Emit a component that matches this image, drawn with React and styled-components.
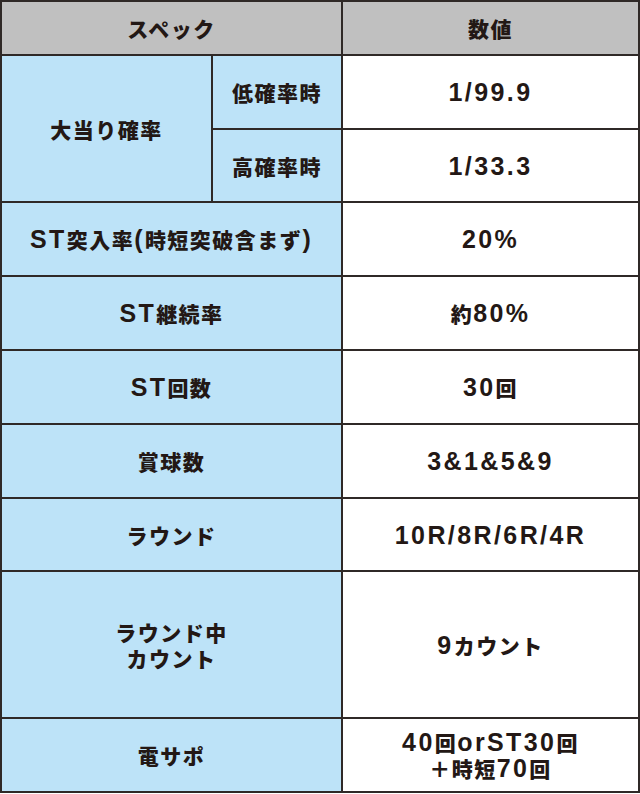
import React from "react";
import styled, { createGlobalStyle } from "styled-components";

const Global = createGlobalStyle`
  html, body { margin: 0; padding: 0; background: #ffffff; }
  body { font-family: "Noto Sans CJK JP", "Liberation Sans", sans-serif; }
`;

const Table = styled.div`
  width: 640px;
  box-sizing: border-box;
  display: grid;
  grid-template-columns: 209px 128px 295px;
  grid-template-rows: 52px 72px 71px 72px 72px 72px 72px 71px 145px 72px;
  gap: 2px;
  padding: 2px;
  background: #2f2927;
  color: #231815;
`;

const Cell = styled.div`
  display: flex;
  align-items: center;
  justify-content: center;
  background: ${(p) =>
    p.$kind === "head" ? "#c0c0c0" : p.$kind === "label" ? "#bde3f8" : "#ffffff"};
  grid-column: ${(p) => p.$col || "auto"};
  grid-row: ${(p) => p.$row || "auto"};
`;

const Label = styled.div`
  font-family: "Noto Sans CJK JP", sans-serif;
  font-weight: 900;
  font-size: 21px;
  letter-spacing: 1.5px;
  line-height: 26px;
  text-align: center;
  white-space: nowrap;
`;

const Latin = styled.span`
  font-family: "Liberation Sans", Arial, sans-serif;
  font-weight: 700;
  font-size: 25px;
  letter-spacing: 2.4px;
  line-height: 1;
`;

function Txt({ children }) {
  const lines = String(children).split("\n");
  return (
    <Label>
      {lines.map((line, li) => (
        <React.Fragment key={li}>
          {li > 0 && <br />}
          {line
            .split(/([\x21-\x7E]+)/)
            .filter(Boolean)
            .map((part, i) =>
              /^[\x21-\x7E]+$/.test(part) ? (
                <Latin key={i}>{part}</Latin>
              ) : (
                <React.Fragment key={i}>{part}</React.Fragment>
              )
            )}
        </React.Fragment>
      ))}
    </Label>
  );
}

const rows = [
  ["ST突入率(時短突破含まず)", "20%"],
  ["ST継続率", "約80%"],
  ["ST回数", "30回"],
  ["賞球数", "3&1&5&9"],
  ["ラウンド", "10R/8R/6R/4R"],
  ["ラウンド中\nカウント", "9カウント"],
  ["電サポ", "40回orST30回\n＋時短70回"],
];

export default function App() {
  return (
    <>
      <Global />
      <Table>
        <Cell $kind="head" $col="1 / 3">
          <Txt>スペック</Txt>
        </Cell>
        <Cell $kind="head">
          <Txt>数値</Txt>
        </Cell>

        <Cell $kind="label" $col="1" $row="2 / 4">
          <Txt>大当り確率</Txt>
        </Cell>
        <Cell $kind="label" $col="2" $row="2">
          <Txt>低確率時</Txt>
        </Cell>
        <Cell $col="3" $row="2">
          <Txt>1/99.9</Txt>
        </Cell>
        <Cell $kind="label" $col="2" $row="3">
          <Txt>高確率時</Txt>
        </Cell>
        <Cell $col="3" $row="3">
          <Txt>1/33.3</Txt>
        </Cell>

        {rows.map(([k, v]) => (
          <React.Fragment key={k}>
            <Cell $kind="label" $col="1 / 3">
              <Txt>{k}</Txt>
            </Cell>
            <Cell $col="3">
              <Txt>{v}</Txt>
            </Cell>
          </React.Fragment>
        ))}
      </Table>
    </>
  );
}
